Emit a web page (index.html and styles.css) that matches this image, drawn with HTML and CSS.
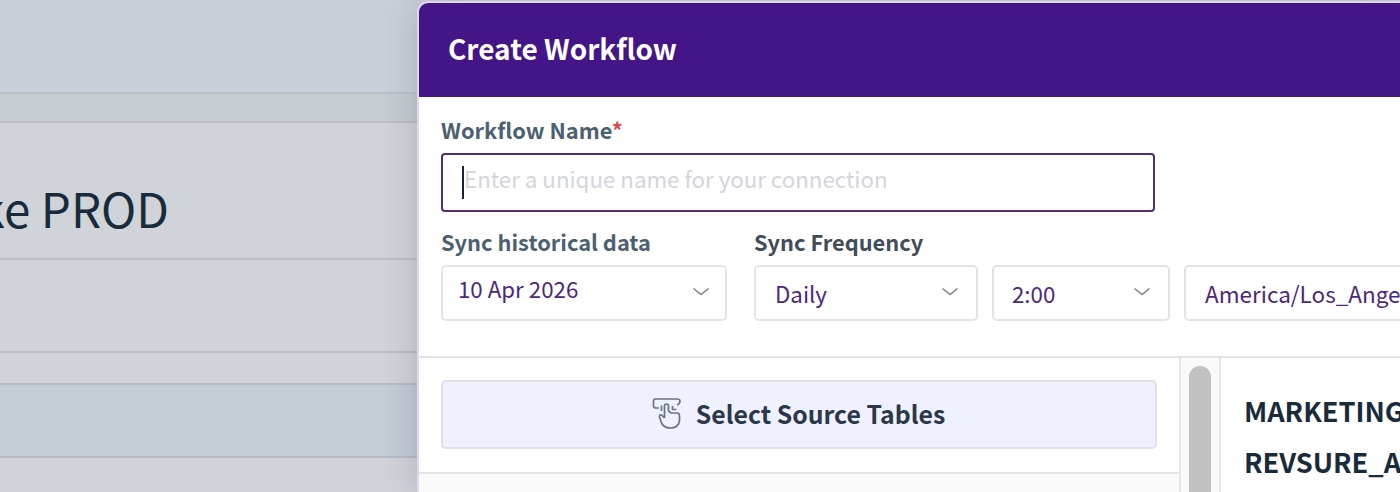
FILE: index.html
```html
<!DOCTYPE html>
<html lang="en">
<head>
  <meta charset="UTF-8">
  <title>Create Workflow</title>
  <link rel="stylesheet" href="styles.css">
</head>
<body>

  <div class="page">
    <div class="topbar"></div>
    <div class="spacer"></div>
    <div class="page-title"><span>ke PROD</span></div>
    <div class="row-tabs"></div>
    <div class="row-gap"></div>
    <div class="row-head"></div>
  </div>

  <div class="modal">
    <div class="modal-header"><h2>Create Workflow</h2></div>

    <div class="form">
      <label class="label name-label">Workflow Name<span class="required">*</span></label>
      <div class="name-input">
        <span class="caret"></span>
        <span class="placeholder">Enter a unique name for your connection</span>
      </div>

      <div class="fields">
        <div class="field">
          <label class="label history-label">Sync historical data</label>
          <div class="select date">
            <span class="date-value">10 Apr 2026</span>
            <svg class="chevron" viewBox="0 0 18 10"><path d="M1.5 1.5 L9 7.5 L16.5 1.5"/></svg>
          </div>
        </div>
        <div class="field">
          <label class="label dark">Sync Frequency</label>
          <div class="selects">
            <div class="select freq">
              <span class="freq-value">Daily</span>
              <svg class="chevron" viewBox="0 0 18 10"><path d="M1.5 1.5 L9 7.5 L16.5 1.5"/></svg>
            </div>
            <div class="select time">
              <span class="time-value">2:00</span>
              <svg class="chevron" viewBox="0 0 18 10"><path d="M1.5 1.5 L9 7.5 L16.5 1.5"/></svg>
            </div>
            <div class="select zone"><span class="zone-value">America/Los_Angeles</span></div>
          </div>
        </div>
      </div>
    </div>

    <div class="panes">
      <div class="source-pane">
        <div class="source-top">
          <button class="source-btn">
            <svg class="tap-icon" viewBox="0 0 30 34">
              <path d="M7 12 H4 Q1.5 12 1.5 9.5 V5 Q1.5 3 3.5 3 H25 Q28 3 28 5 Q28 8 25 9"/>
              <path d="M12.5 22 V10 Q12.5 8 14.5 8 Q16.5 8 16.5 10 V15 L19 17 H25 Q27.5 17 27.5 20 V25 Q26 32 18.500 32 Q12 32 9.5 27 L7.5 21 Q7 18.500 9.5 19 L12.5 22"/>
              <path d="M9.5 15 V9.500 M20.5 10 V13.500 H24.500"/>
            </svg>
            <span>Select Source Tables</span>
          </button>
        </div>
        <div class="source-list"></div>
      </div>
      <div class="scrollbar"><div class="thumb"></div></div>
      <div class="target-pane">
        <div class="schema marketing">MARKETING_</div>
        <div class="schema revsure">REVSURE_AI</div>
      </div>
    </div>
  </div>

</body>
</html>
```
FILE: styles.css
```css
* {
  box-sizing: border-box;
}
body {
  margin: 0;
  height: 492px;
  overflow: hidden;
  position: relative;
  background: #d0d4d8;
  font-family: "Noto Sans CJK SC", "Noto Sans", sans-serif;
}
.page {
  height: 492px;
}
.topbar {
  height: 94px;
  background: #cacfd9;
  border-bottom: 2px solid #bbc1cb;
}
.spacer {
  height: 29px;
  background: #c6ccd0;
  border-bottom: 2px solid #b8bfc7;
}
.page-title {
  height: 137px;
  width: 100%;
  border-bottom: 2px solid #b9bfc6;
  line-height: 169px;
}
.page-title span {
  display: flex;
  justify-content: flex-end;
  width: 169px;
  white-space: nowrap;
  font-size: 47.5px;
  color: #182b3c;
}
.row-tabs {
  height: 93px;
  border-bottom: 2px solid #b9bfc6;
}
.row-gap {
  height: 32px;
  border-bottom: 2px solid #b5bdc6;
}
.row-head {
  height: 73px;
  background: #c4ccd5;
  border-bottom: 2px solid #b5bdc6;
}

/* dialog over the page */
.modal {
  position: absolute;
  left: 419px;
  top: 3px;
  right: 0;
  height: 489px;
  overflow: hidden;
  background: #fff;
  border-radius: 9px 0 0 0;
  box-shadow: 0 0 0 2px #dfd8ee, 0 0 36px rgba(60, 66, 90, 0.27);
}
.modal-header {
  height: 94px;
  padding-left: 29px;
  background: #441586;
}
.modal-header h2 {
  margin: 0;
  line-height: 90px;
  font-size: 28px;
  font-weight: 700;
  color: #fff;
}
.form {
  height: 259px;
  padding: 16px 0 0 22px;
}
.label {
  display: block;
  height: 40px;
  line-height: 34px;
  font-size: 21.8px;
  font-weight: 700;
  color: #4d6071;
  white-space: nowrap;
}
.label.dark {
  color: #414d59;
}
.required {
  color: #d84a55;
}
.name-input {
  display: flex;
  align-items: flex-start;
  width: 714px;
  height: 59px;
  padding: 11px 0 0 19px;
  border: 2px solid #52306f;
  border-radius: 4px;
}
.caret {
  width: 2px;
  height: 33px;
  background: #172536;
}
.placeholder {
  font-size: 22.3px;
  line-height: 24px;
  color: #d3d5dc;
  white-space: nowrap;
}
.fields {
  display: flex;
  gap: 27px;
  padding-top: 13px;
}
.selects {
  display: flex;
  gap: 14px;
}
.select {
  display: flex;
  align-items: flex-start;
  justify-content: space-between;
  flex-shrink: 0;
  height: 56px;
  padding: 10px 17px 0 19px;
  border: 2px solid #e2e4e9;
  border-radius: 5px;
  font-size: 22.3px;
  line-height: 32px;
  color: #4d287c;
  white-space: nowrap;
}
.date {
  width: 286px;
  padding: 5px 15px 0 15px;
}
.date .chevron {
  margin-top: 15px;
}
.freq {
  width: 224px;
}
.time {
  width: 178px;
  padding-left: 18px;
}
.zone {
  width: 300px;
  padding-left: 19px;
  font-size: 22.5px;
}
.chevron {
  width: 18px;
  height: 10px;
  margin-top: 10px;
  fill: none;
  stroke: #7c8085;
  stroke-width: 1.6;
}
.panes {
  display: flex;
  height: 170px;
  border-top: 2px solid #e0e2e6;
}
.source-pane {
  width: 760px;
  flex-shrink: 0;
}
.source-top {
  height: 116px;
  padding: 22px 0 0 22px;
  border-bottom: 2px solid #e2e4e6;
}
.source-btn {
  display: flex;
  align-items: center;
  justify-content: center;
  gap: 14px;
  width: 716px;
  height: 69px;
  padding: 0 1px 3px 0;
  border: 2px solid #dfe0ea;
  border-radius: 5px;
  background: #f0f1fe;
  font-family: inherit;
  font-size: 24.8px;
  font-weight: 700;
  line-height: 60px;
  color: #2b3849;
}
.tap-icon {
  width: 30px;
  height: 34px;
  fill: none;
  stroke: #697484;
  stroke-width: 1.7;
}
.source-list {
  height: 60px;
  background: #fafafa;
}
.scrollbar {
  width: 42px;
  flex-shrink: 0;
  padding: 8px 0 0 8px;
  background: #fafafa;
  border-left: 2px solid #e6e7e9;
  border-right: 2px solid #e6e7e9;
}
.thumb {
  width: 22px;
  height: 160px;
  border-radius: 11px;
  background: #c1c1c1;
}
.target-pane {
  padding: 27px 0 0 23px;
}
.schema {
  height: 51px;
  line-height: 51px;
  font-size: 27.2px;
  font-weight: 700;
  color: #192b3b;
}
```
